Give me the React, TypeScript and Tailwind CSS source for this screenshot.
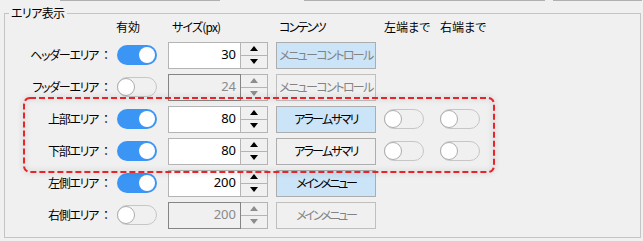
import React from "react";

const jp = "font-['Noto_Sans_CJK_JP','Noto_Sans',sans-serif] [font-feature-settings:'palt']";

function Toggle({ on }: { on: boolean }) {
  if (on) {
    return (
      <div className="w-[40px] h-[20px] rounded-full bg-[#3a95f5] flex items-center justify-end pr-[2px] shrink-0">
        <span className="w-[16px] h-[16px] rounded-full bg-white block" />
      </div>
    );
  }
  return (
    <div className="w-[40px] h-[20px] rounded-full border border-[#c6c6c6] bg-[#f0f0f0] flex items-center shrink-0 box-border">
      <span className="w-[18px] h-[18px] -ml-px rounded-full bg-white border border-[#acacac] block box-border" />
    </div>
  );
}

function Arrow({ up, disabled }: { up: boolean; disabled: boolean }) {
  return (
    <svg width="8" height="5" viewBox="0 0 8 5" className="block">
      <polygon
        points={up ? "0,5 8,5 4,0" : "0,0 8,0 4,5"}
        fill={disabled ? "#8c8c8c" : "#000"}
      />
    </svg>
  );
}

function Spin({ value, disabled }: { value: string; disabled: boolean }) {
  return (
    <div className="flex h-[27px] shrink-0">
      <div
        className={
          "w-[73px] h-full border flex items-center justify-end pr-[4px] text-[13px] font-['Noto_Sans',sans-serif] " +
          (disabled
            ? "border-[#858585] bg-[#f0f0f0] text-[#8a8a8a]"
            : "border-[#b4b4b4] bg-white text-black")
        }
      >
        {value}
      </div>
      <div className="w-[27px] h-full border border-l-0 border-[#b4b4b4] flex flex-col bg-[#f0f0f0]">
        <div className="flex-1 flex items-center justify-center border-b border-[#b4b4b4]">
          <Arrow up disabled={disabled} />
        </div>
        <div className="flex-1 flex items-center justify-center">
          <Arrow up={false} disabled={disabled} />
        </div>
      </div>
    </div>
  );
}

type Kind = "blueGray" | "disabled" | "blue" | "normal";

function Btn({ label, kind, track }: { label: string; kind: Kind; track: string }) {
  const cls =
    kind === "blueGray"
      ? "bg-[#cce4f7] border-[#adadad] text-[#838383]"
      : kind === "blue"
      ? "bg-[#cce4f7] border-[#adadad] text-black"
      : kind === "normal"
      ? "bg-[#f0f0f0] border-[#adadad] text-black"
      : "bg-[#f0f0f0] border-[#bfbfbf] text-[#838383]";
  return (
    <div
      className={
        "w-[100px] h-[27px] border flex items-center justify-center text-[12px] whitespace-nowrap shrink-0 " +
        jp +
        " " +
        cls
      }
    >
      <span className={track}>{label}</span>
    </div>
  );
}

type RowT = {
  label: string;
  on: boolean;
  value: string;
  btn: string;
  kind: Kind;
  track: string;
  edges: boolean;
};

const rows: RowT[] = [
  { label: "ヘッダーエリア", on: true, value: "30", btn: "メニューコントロール", kind: "blueGray", track: "tracking-[-1.6px]", edges: false },
  { label: "フッダーエリア", on: false, value: "24", btn: "メニューコントロール", kind: "disabled", track: "tracking-[-1.6px]", edges: false },
  { label: "上部エリア", on: true, value: "80", btn: "アラームサマリ", kind: "blue", track: "tracking-[-1.8px]", edges: true },
  { label: "下部エリア", on: true, value: "80", btn: "アラームサマリ", kind: "normal", track: "tracking-[-1.8px]", edges: true },
  { label: "左側エリア", on: true, value: "200", btn: "メインメニュー", kind: "blue", track: "tracking-[-2.2px]", edges: false },
  { label: "右側エリア", on: false, value: "200", btn: "メインメニュー", kind: "disabled", track: "tracking-[-2.2px]", edges: false },
];

export default function App() {
  return (
    <div className={"relative w-[643px] h-[241px] bg-[#f0f0f0] overflow-hidden text-black " + jp}>
      {/* remnants of controls above */}
      <div className="flex h-px">
        <div className="ml-[60px] w-[160px] h-px bg-[#b0b0b0]" />
        <div className="ml-[84px] w-[241px] h-px bg-[#b0b0b0]" />
        <div className="ml-[8px] w-[89px] h-px bg-[#b0b0b0]" />
      </div>

      {/* group box */}
      <div className="relative ml-[4px] mt-[12px] w-[637px] h-[225px] border border-[#c4c4c4]">
        <span className="absolute left-[4px] top-[-9px] px-[2px] bg-[#f0f0f0] text-[12px] leading-[16px] tracking-[-0.6px]">
          エリア表示
        </span>

        <div className="flex items-center h-[25px] text-[12px] whitespace-nowrap">
          <div className="w-[103px]" />
          <div className="ml-[8px] w-[41px]">有効</div>
          <div className="ml-[11px] w-[100px] pl-[4px] tracking-[-0.8px]">サイズ(px)</div>
          <div className="ml-[8px] w-[100px] pl-[3px] tracking-[-1.8px]">コンテンツ</div>
          <div className="ml-[8px] w-[56px]">左端まで</div>
          <div>右端まで</div>
        </div>

        {rows.map((r, i) => (
          <div key={i} className="flex items-center h-[32px]">
            <div className="w-[103px] flex justify-end items-center text-[12px] whitespace-nowrap">
              <span className="tracking-[-1.3px]">{r.label}</span>
              <span className="ml-[5px] w-[5px]">：</span>
            </div>
            <div className="ml-[9px]">
              <Toggle on={r.on} />
            </div>
            <div className="ml-[11px]">
              <Spin value={r.value} disabled={!r.on} />
            </div>
            <div className="ml-[8px]">
              <Btn label={r.btn} kind={r.kind} track={r.track} />
            </div>
            {r.edges && (
              <>
                <div className="ml-[8px]">
                  <Toggle on={false} />
                </div>
                <div className="ml-[16px]">
                  <Toggle on={false} />
                </div>
              </>
            )}
          </div>
        ))}
      </div>

      {/* red dashed highlight annotation */}
      <svg
        className="absolute left-[18px] top-[92px] pointer-events-none"
        width="482"
        height="86"
        viewBox="0 0 482 86"
      >
        <defs>
          <filter id="sh" x="-10%" y="-20%" width="120%" height="140%">
            <feGaussianBlur stdDeviation="2.5" />
          </filter>
        </defs>
        <rect x="6" y="6" width="470" height="74" rx="6" fill="none" stroke="rgba(0,0,0,0.12)" strokeWidth="3" filter="url(#sh)" />
        <rect x="6" y="6" width="470" height="74" rx="6" fill="none" stroke="#e8232a" strokeWidth="2" strokeDasharray="6 3" />
      </svg>
    </div>
  );
}
